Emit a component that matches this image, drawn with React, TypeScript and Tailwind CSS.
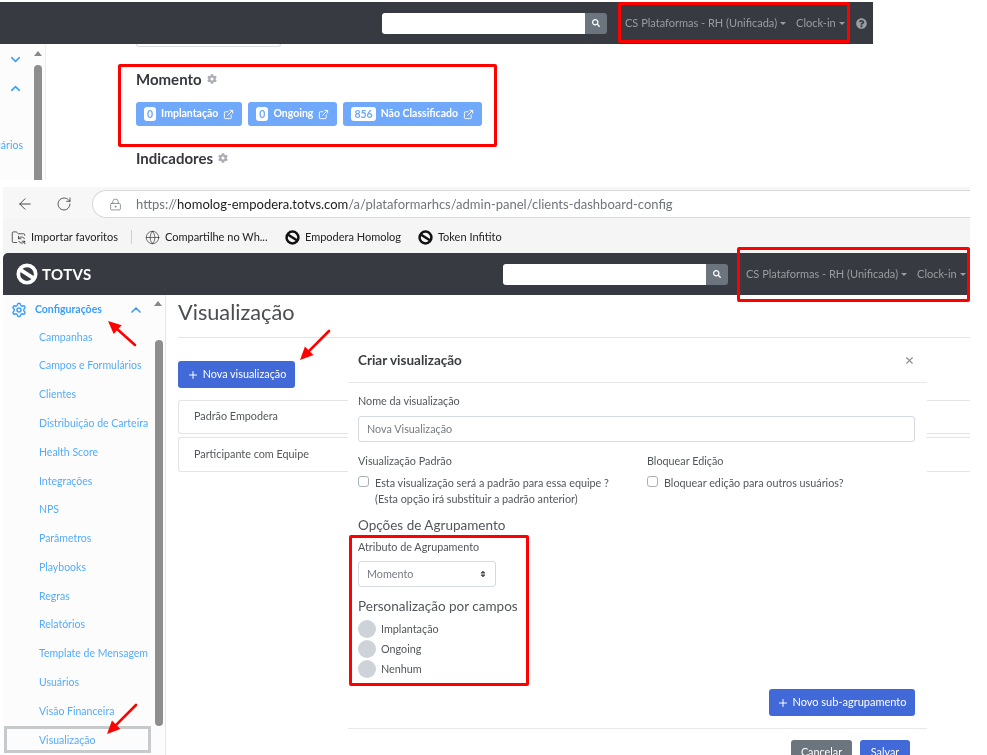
import { LockKeyhole, RotateCw, ArrowLeft, Globe, Settings, ChevronUp, ChevronDown, ExternalLink, Plus, X, FolderSync } from 'lucide-react';
import { FaSearch, FaCog, FaQuestionCircle, FaSort } from 'react-icons/fa';

const menuItems = ['Campanhas', 'Campos e Formulários', 'Clientes', 'Distribuição de Carteira', 'Health Score', 'Integrações', 'NPS', 'Parâmetros', 'Playbooks', 'Regras', 'Relatórios', 'Template de Mensagem', 'Usuários', 'Visão Financeira', 'Visualização'];

function Caret() {
  return <span className="ml-[3px] inline-block align-middle border-x-[3px] border-t-[3px] border-x-transparent border-t-current" />;
}

function TotvsLogo({ size, color }: { size: number; color: string }) {
  return (
    <svg width={size} height={size} viewBox="0 0 24 24" fill="none" className="shrink-0">
      <circle cx="12" cy="12" r="9.5" stroke={color} strokeWidth="4" />
      <path d="M5 7.5 L19 16.5" stroke={color} strokeWidth="4" />
    </svg>
  );
}

function NavSearch() {
  return (
    <div className="flex h-[21px] w-[225px] shrink-0">
      <div className="w-[203px] rounded-l-[3px] bg-white" />
      <div className="flex w-[22px] items-center justify-center rounded-r-[3px] bg-[#6c757d]">
        <FaSearch size={8} className="text-white" />
      </div>
    </div>
  );
}

function Badge({ count, label }: { count: string; label: string }) {
  return (
    <div className="flex h-6 items-center rounded-[3px] bg-[#70a9fb] px-2 text-[10.5px] font-bold text-white">
      <span className="rounded-[3px] bg-white px-[3px] py-px leading-[12px] text-[#70a9fb]">{count}</span>
      <span className="ml-[5px]">{label}</span>
      <ExternalLink size={11} className="ml-[5px]" />
    </div>
  );
}

function Arrow({ x1, y1, x2, y2 }: { x1: number; y1: number; x2: number; y2: number }) {
  const a = Math.atan2(y2 - y1, x2 - x1);
  const px = (d: number, s: number) => x2 - Math.cos(a) * d - Math.sin(a) * s;
  const py = (d: number, s: number) => y2 - Math.sin(a) * d + Math.cos(a) * s;
  return (
    <>
      <line x1={x1} y1={y1} x2={px(8, 0)} y2={py(8, 0)} stroke="#f00" strokeWidth="2.6" strokeLinecap="round" />
      <polygon points={`${x2},${y2} ${px(13, 6)},${py(13, 6)} ${px(13, -6)},${py(13, -6)}`} fill="#f00" />
    </>
  );
}

function TopShot() {
  return (
    <div className="mt-[2px] h-[178px] w-[873px] overflow-hidden">
      <div className="flex h-[42px] items-center bg-[#373a41] pl-[382px] text-[11px] text-[#9a9da1]">
        <NavSearch />
        <span className="ml-[18px]">CS Plataformas - RH (Unificada)<Caret /></span>
        <span className="ml-[10px]">Clock-in<Caret /></span>
        <FaQuestionCircle size={11} className="ml-[11px]" />
      </div>
      <div className="flex h-[136px]">
        <div className="relative w-[46px] shrink-0 border-r border-[#eeeeee] bg-[#fcfcfc] text-[#4fa9fb]">
          <ChevronDown size={15} strokeWidth={2.5} className="ml-2 mt-[8px] text-[#3b9efc]" />
          <ChevronUp size={15} strokeWidth={2.5} className="ml-2 mt-[14px] text-[#3b9efc]" />
          <p className="-ml-[17px] mt-[42px] text-[10.5px]">Usuários</p>
          <div className="absolute left-[34px] top-[7px] border-x-[4px] border-b-[5px] border-x-transparent border-b-[#888]" />
          <div className="absolute left-[34px] top-[21px] h-[120px] w-2 rounded-t bg-[#8e8e8e]" />
        </div>
        <div className="pl-[90px] text-[#35383d]">
          <div className="h-[3px] w-[145px] rounded-b-[3px] border border-t-0 border-[#d9dde3]" />
          <h2 className="mt-[22px] flex items-center text-[15px] font-bold leading-[20px]">Momento<FaCog size={10} className="ml-[5px] text-[#a9adb3]" /></h2>
          <div className="mt-[13px] flex gap-[6px]">
            <Badge count="0" label="Implantação" />
            <Badge count="0" label="Ongoing" />
            <Badge count="856" label="Não Classificado" />
          </div>
          <h2 className="mt-[22px] flex items-center text-[15px] font-bold leading-[20px]">Indicadores<FaCog size={10} className="ml-[5px] text-[#a9adb3]" /></h2>
        </div>
      </div>
    </div>
  );
}

function BrowserBars() {
  return (
    <>
      <div className="flex h-[31px] items-end bg-[#f7f7f7] text-[#444]">
        <div className="flex h-[28px] w-[89px] shrink-0 items-center pl-[13px]">
          <ArrowLeft size={18} strokeWidth={1.3} />
          <RotateCw size={16} strokeWidth={1.3} className="ml-[22px]" />
        </div>
        <div className="flex h-[28px] flex-1 items-center rounded-l-[14px] border-y border-l border-[#d8d8d8] bg-white pl-4 text-[13px] text-[#70757a]">
          <LockKeyhole size={13} strokeWidth={1.4} />
          <span className="ml-[14px] pt-px">https://<span className="text-[#1c1c1c]">homolog-empodera.totvs.com</span>/a/plataformarhcs/admin-panel/clients-dashboard-config</span>
        </div>
      </div>
      <div className="flex h-[35px] items-center bg-[#f5f5f5] pl-2 pt-[3px] text-[11px] text-[#222]">
        <FolderSync size={15} strokeWidth={1.2} />
        <span className="ml-[5px]">Importar favoritos</span>
        <div className="ml-[13px] h-[14px] w-px bg-[#cfcfcf]" />
        <Globe size={15} strokeWidth={1} className="ml-[13px]" />
        <span className="ml-[5px] w-[120px]">Compartilhe no Wh...</span>
        <TotvsLogo size={15} color="#111" />
        <span className="ml-[5px] w-[113px]">Empodera Homolog</span>
        <TotvsLogo size={15} color="#111" />
        <span className="ml-[5px]">Token Infitito</span>
      </div>
      <div className="flex h-[42px] items-center rounded-tl-[5px] bg-[#373a41] pl-[13px] text-[11px] text-[#9a9da1]">
        <TotvsLogo size={22} color="#ffffff" />
        <span className="ml-[4px] w-[461px] text-[15px] font-bold tracking-wide text-white">TOTVS</span>
        <NavSearch />
        <span className="ml-[18px]">CS Plataformas - RH (Unificada)<Caret /></span>
        <span className="ml-[10px]">Clock-in<Caret /></span>
      </div>
    </>
  );
}

function Sidebar() {
  return (
    <aside className="relative w-[163px] shrink-0 border-r border-[#e6e6e6] bg-[#fcfcfc] text-[10.5px] text-[#56acfa]">
      <div className="flex h-[28px] items-center pl-2 pt-px font-bold text-[#3b9efc]">
        <Settings size={16} strokeWidth={2.2} />
        <span className="ml-2">Configurações</span>
        <ChevronUp size={16} strokeWidth={2.5} className="ml-[26px]" />
      </div>
      {menuItems.map(item => (
        <div key={item} className="flex h-[28.8px] items-center whitespace-nowrap pl-9">{item}</div>
      ))}
      <div className="absolute left-[151px] top-[6px] border-x-[4px] border-b-[5px] border-x-transparent border-b-[#888]" />
      <div className="absolute left-[152px] top-[45px] h-[386px] w-2 rounded bg-[#8e8e8e]" />
      <div className="absolute left-px top-[431px] h-[27px] w-[147px] border-[3px] border-[#c6cacd]" />
    </aside>
  );
}

function FieldLabel({ children }: { children: string }) {
  return <p className="text-[10.8px] leading-[15px] text-[#52565b]">{children}</p>;
}

function CheckRow({ children }: { children: React.ReactNode }) {
  return (
    <div className="mt-[7px] flex text-[10.8px] leading-[15.5px] text-[#52565b]">
      <div className="mr-[6px] mt-[1px] size-[11px] shrink-0 rounded-[3px] border border-[#aab0b8] bg-white" />
      <div>{children}</div>
    </div>
  );
}

function ColorOption({ label }: { label: string }) {
  return (
    <div className="flex h-5 items-center text-[10.8px] text-[#52565b]">
      <div className="size-[18px] rounded-full bg-[#ced3d9]" />
      <span className="ml-[5px]">{label}</span>
    </div>
  );
}

function Modal() {
  return (
    <div className="absolute left-[345px] top-[45px] h-[415px] w-[579px] bg-white text-[#52565b]">
      <div className="flex h-[43px] items-center justify-between border-b border-[#e8e8e8] pb-[2px] pl-[10px] pr-[12px]">
        <h3 className="text-[13.5px] font-bold text-[#3a3d42]">Criar visualização</h3>
        <X size={11} strokeWidth={2.5} className="text-[#8b8f94]" />
      </div>
      <div className="pl-[10px] pr-[12px]">
        <div className="pt-[10px]"><FieldLabel>Nome da visualização</FieldLabel></div>
        <div className="mt-[8px] flex h-[26px] items-center rounded-[3px] border border-[#d5dae0] pl-2 text-[10.8px] text-[#777b80]">Nova Visualização</div>
        <div className="mt-[11px] flex">
          <div className="w-[289px]">
            <FieldLabel>Visualização Padrão</FieldLabel>
            <CheckRow>Esta visualização será a padrão para essa equipe ?<br />(Esta opção irá substituir a padrão anterior)</CheckRow>
          </div>
          <div>
            <FieldLabel>Bloquear Edição</FieldLabel>
            <CheckRow>Bloquear edição para outros usuários?</CheckRow>
          </div>
        </div>
        <h4 className="mt-[10px] text-[13.5px] leading-[18px] text-[#52565b]">Opções de Agrupamento</h4>
        <div className="mt-[5px]"><FieldLabel>Atributo de Agrupamento</FieldLabel></div>
        <div className="mt-[7px] flex h-[26px] w-[138px] items-center justify-between rounded-[3px] border border-[#d5dae0] px-2 text-[10.8px] text-[#777b80]">
          Momento
          <FaSort size={8} className="text-[#444]" />
        </div>
        <h4 className="mt-[10px] text-[13.5px] leading-[18px]">Personalização por campos</h4>
        <div className="mt-[4px]">
          <ColorOption label="Implantação" />
          <ColorOption label="Ongoing" />
          <ColorOption label="Nenhum" />
        </div>
        <div className="mt-[10px] flex justify-end">
          <button className="flex h-[27px] w-[146px] items-center justify-center rounded-[3px] bg-[#4169d8] text-[11px] text-white">
            <Plus size={12} className="mr-[3px]" />Novo sub-agrupamento
          </button>
        </div>
      </div>
      <div className="mt-[12px] flex h-[28px] items-start justify-end gap-2 border-t border-[#e8e8e8] pr-[17px] pt-[11px]">
        <button className="h-[24px] w-[61px] rounded-[3px] bg-[#6c757d] text-[10.8px] text-white">Cancelar</button>
        <button className="h-[24px] w-[50px] rounded-[3px] bg-[#4169d8] text-[10.8px] text-white">Salvar</button>
      </div>
    </div>
  );
}

function MainPanel() {
  return (
    <main className="flex-1 pl-[12px]">
      <h1 className="h-[42px] pt-[3px] text-[21.7px] leading-[28px] text-[#4a4d52]">Visualização</h1>
      <div className="border-t border-[#e4e4e4] pt-[23px]">
        <button className="flex h-[27px] w-[117px] items-center justify-center rounded-[3px] bg-[#4169d8] text-[10.8px] text-white">
          <Plus size={12} className="mr-[4px]" />Nova visualização
        </button>
        <div className="mt-[12px] flex h-[34px] items-center rounded-l-[3px] border-y border-l border-[#e4e4e4] pb-[2px] pl-[15px] text-[10.8px] text-[#52565b]">Padrão Empodera</div>
        <div className="mt-[3px] flex h-[35px] items-center rounded-l-[3px] border-y border-l border-[#e4e4e4] pl-[15px] text-[10.8px] text-[#52565b]">Participante com Equipe</div>
      </div>
    </main>
  );
}

export default function App() {
  return (
    <div className="relative h-[755px] w-[987px] overflow-hidden bg-white font-['Lato',sans-serif] blur-[0.35px]">
      <TopShot />
      <div className="ml-[3px] mt-[7px] w-[967px]">
        <BrowserBars />
        <div className="relative flex h-[460px]">
          <Sidebar />
          <MainPanel />
          <Modal />
        </div>
      </div>

      {/* red highlight boxes */}
      <div className="absolute left-[618px] top-[2px] h-[41px] w-[232px] rounded-[2px] border-[3px] border-[#f00]" />
      <div className="absolute left-[118px] top-[64px] h-[83px] w-[379px] rounded-[2px] border-[3px] border-[#f00]" />
      <div className="absolute left-[737px] top-[247px] h-[55px] w-[233px] rounded-[2px] border-[3px] border-[#f00]" />
      <div className="absolute left-[349px] top-[535px] h-[151px] w-[180px] rounded-[2px] border-[3px] border-[#f00]" />

      <svg className="absolute left-0 top-0" width="987" height="755">
        <Arrow x1={135} y1={345} x2={108} y2={321} />
        <Arrow x1={329} y1={331} x2={300} y2={360} />
        <Arrow x1={136} y1={705} x2={107} y2={734} />
      </svg>
    </div>
  );
}
